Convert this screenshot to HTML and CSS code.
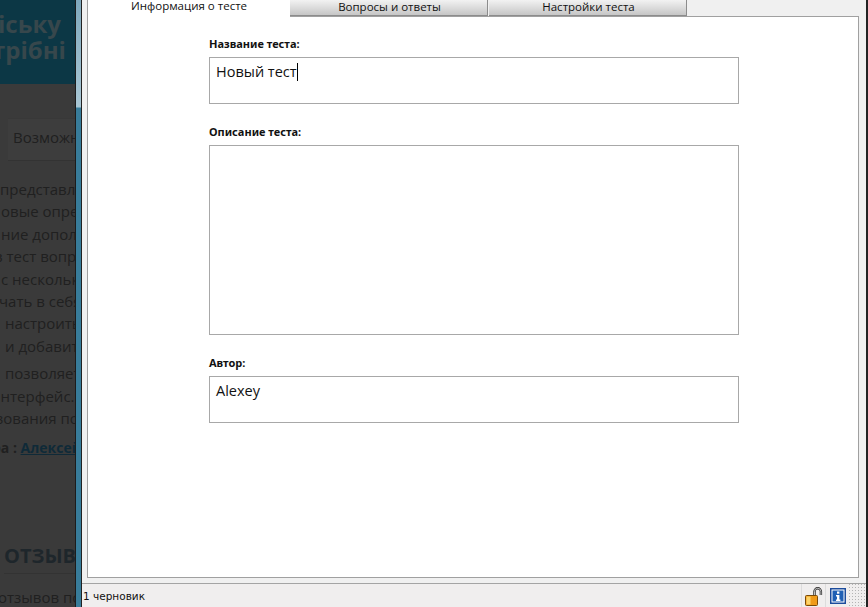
FILE: index.html
```html
<!DOCTYPE html>
<html lang="ru">
<head>
  <meta charset="UTF-8" />
  <title>Новый тест</title>
  <link rel="stylesheet" href="styles.css">
</head>
<body>

<!-- страница сайта за окном -->
<div class="site">
  <div class="site-head">
    <div class="head-a">іську</div>
    <div class="head-b">трібні</div>
  </div>
  <div class="site-tab">Возможн</div>
  <div class="site-text">
    <p>
      <span class="line in-a">представл</span>
      <span class="line in-b">овые опре</span>
      <span class="line in-c">ние допол</span>
      <span class="line in-d">в тест вопр</span>
      <span class="line in-e">с нескольк</span>
      <span class="line in-f">чать в себя</span>
      <span class="line in-g">настроить</span>
      <span class="line in-g">и добавить</span>
    </p>
    <p>
      <span class="line in-g">позволяет</span>
      <span class="line in-h">интерфейс. О</span>
      <span class="line in-i">зования по</span>
    </p>
    <p class="site-author"><span class="line in-j">ра : <a>Алексей</a></span></p>
  </div>
  <div class="site-title">ОТЗЫВЫ</div>
  <div class="site-last"><span class="line in-k">отзывов по</span></div>
</div>

<!-- рамка окна -->
<div class="frame"></div>

<!-- окно программы -->
<div class="window">
  <div class="tabs">
    <div class="tab active">Информация о тесте</div>
    <div class="tab">Вопросы и ответы</div>
    <div class="tab">Настройки теста</div>
  </div>

  <div class="panel">
    <label class="label">Название теста:</label>
    <div class="field field-short">Новый тест<span class="caret"></span></div>
    <label class="label">Описание теста:</label>
    <div class="field field-tall"></div>
    <label class="label">Автор:</label>
    <div class="field field-short">Alexey</div>
  </div>

  <div class="status">
    <span class="status-text">1 черновик</span>
    <div class="status-cell">
      <svg width="18" height="19" viewBox="0 0 18 19">
        <path d="M9.5 9V4.5a3.2 3.2 0 0 1 6.4 0V8" fill="none" stroke="#2b2b2b" stroke-width="2.4"/>
        <path d="M9.5 9V4.5a3.2 3.2 0 0 1 6.4 0V8" fill="none" stroke="#e8e8e8" stroke-width="0.8"/>
        <rect x="0.5" y="8.5" width="12" height="10" rx="1" fill="#f09a18" stroke="#7a4a08"/>
        <rect x="1.5" y="9.5" width="4" height="8" fill="#fdd36a"/>
      </svg>
    </div>
    <div class="status-cell">
      <svg width="16" height="16" viewBox="0 0 16 16">
        <rect x="0" y="0" width="16" height="16" fill="#1c4c9c"/>
        <rect x="1.5" y="1.5" width="13" height="13" fill="#fff"/>
        <rect x="2.5" y="2.5" width="11" height="11" fill="#1f5fb4"/>
        <rect x="7" y="3.5" width="2.4" height="2.2" fill="#fff"/>
        <path d="M6 7h3.4v4.6h1V13H6v-1.4h1V8.4H6z" fill="#fff"/>
      </svg>
    </div>
    <div class="grip"></div>
  </div>
</div>

</body>
</html>
```
FILE: styles.css
```css
html, body {
  margin: 0;
  padding: 0;
  height: 100%;
}
body {
  display: flex;
  height: 607px;
  overflow: hidden;
  background: #f0f0f0;
}

/* затемнённый сайт слева */
.site {
  flex: 0 0 75px;
  width: 75px;
  background: #3a3a3a;
  overflow: hidden;
  font-family: "Open Sans", sans-serif;
  font-size: 15px;
  color: #202020;
  white-space: nowrap;
}
.site-head {
  height: 84px;
  box-sizing: border-box;
  padding-top: 11px;
  background: #0c3745;
  color: #37474c;
  font-size: 24px;
  font-weight: 700;
  line-height: 26px;
}
.head-a { margin-left: -2px; }
.head-b { margin-left: -8px; }
.site-tab {
  height: 41px;
  margin-top: 34px;
  margin-left: 8px;
  padding-left: 5px;
  line-height: 36px;
  background: #3d3d3d;
  border-top: 1px solid #383838;
  border-bottom: 1px solid #333;
}
.site-text {
  margin-top: 17px;
}
.site-text p {
  margin: 0 0 5px;
}
.line {
  display: block;
  height: 22.4px;
  line-height: 22.4px;
}
.in-a { margin-left: 0; }
.in-b { margin-left: 1px; }
.in-c { margin-left: 1px; }
.in-d { margin-left: -6px; }
.in-e { margin-left: 1px; }
.in-f { margin-left: -1px; }
.in-g { margin-left: 5px; }
.in-h { margin-left: -9px; }
.in-i { margin-left: -4px; }
.in-j { margin-left: -8px; font-size: 14px; font-weight: 700; }
.in-k { margin-left: -2px; }
.site-author {
  padding-top: 3px;
}
.site-author a {
  color: #0f2a38;
  text-decoration: underline;
  font-weight: 700;
}
.site-title {
  margin-top: 82px;
  margin-left: 4px;
  padding-bottom: 3px;
  font-size: 20px;
  line-height: 28px;
  font-weight: 700;
  color: #1e262b;
  border-bottom: 1px solid #333;
}
.site-last {
  margin-top: 12px;
}

/* синяя рамка окна */
.frame {
  flex: 0 0 5px;
  border-left: 1px solid #1c1c1c;
  border-right: 1px solid #222;
  background: linear-gradient(#7fa8bc, #a9c6d4 107px, #387c9a 108px, #387c9a);
}

/* окно */
.window {
  flex: 1;
  display: flex;
  flex-direction: column;
  box-sizing: border-box;
  border-right: 2px solid #222;
  background: #f0f0f0;
}
.tabs {
  display: flex;
  height: 16px;
  margin-left: 5px;
  font-family: "Open Sans", sans-serif;
  font-size: 11.5px;
  color: #111;
}
.tab {
  box-sizing: border-box;
  width: 198px;
  height: 16px;
  padding-left: 2px;
  text-align: center;
  line-height: 13px;
  background: linear-gradient(#f2f2f2, #c6c6c6);
  border-right: 1px solid #8c8c8c;
  border-bottom: 1px solid #8c8c8c;
  margin-right: 1px;
}
.tab.active {
  width: 203px;
  height: 17px;
  margin-right: 0;
  padding-left: 0;
  background: #fff;
  border: none;
  border-left: 1px solid #a0a0a0;
  line-height: 11px;
  position: relative;
  z-index: 1;
}
.panel {
  flex: none;
  box-sizing: border-box;
  height: 562px;
  width: 772px;
  margin-left: 5px;
  padding: 20px 0 0 121px;
  background: #fff;
  border: 1px solid #a0a0a0;
}
.label {
  display: block;
  height: 20px;
  font-family: "Noto Sans", sans-serif;
  font-size: 11px;
  font-weight: 700;
  line-height: 14px;
  color: #111;
}
.field {
  box-sizing: border-box;
  width: 530px;
  margin-bottom: 21px;
  padding: 4px 6px;
  border: 1px solid #a8a8a8;
  font-family: "Open Sans", sans-serif;
  font-size: 14.5px;
  line-height: 20px;
  color: #111;
}
.field-short {
  height: 47px;
}
.field-tall {
  height: 190px;
}
.caret {
  display: inline-block;
  width: 1px;
  height: 18px;
  background: #000;
  vertical-align: -4px;
}

/* строка состояния */
.status {
  margin-top: 5px;
  flex: 1;
  display: flex;
  align-items: center;
  padding-left: 1px;
  background: #f0eeee;
  border-top: 1px solid #a4a4a4;
  font-family: "DejaVu Sans", sans-serif;
  font-size: 10.5px;
  color: #111;
}
.status-text {
  flex: 1;
}
.status-cell {
  display: flex;
  align-items: center;
  justify-content: center;
  box-sizing: border-box;
  height: 100%;
  width: 24px;
  padding-top: 1px;
  border-left: 1px solid #dcdcdc;
}
.grip {
  width: 17px;
  height: 100%;
  background: radial-gradient(circle, #b4b4b4 0.8px, transparent 1px) right bottom / 3px 3px;
}
```
